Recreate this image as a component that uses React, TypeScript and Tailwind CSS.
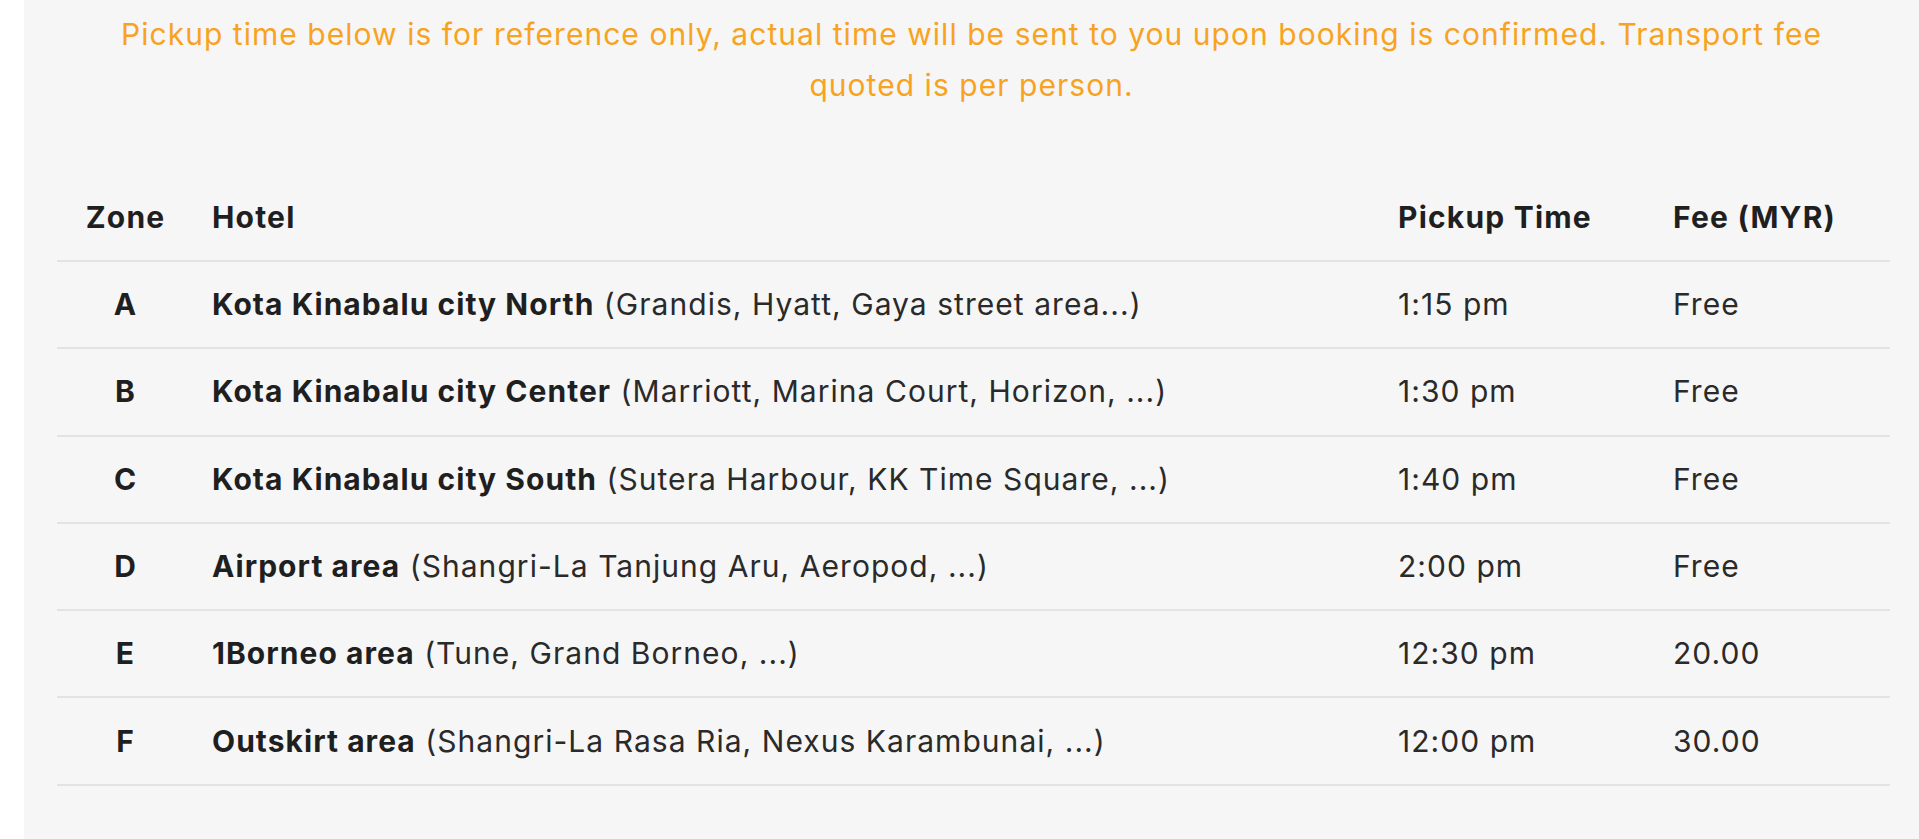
const rows = [
  { zone: "A", area: "Kota Kinabalu city North", hotels: "(Grandis, Hyatt, Gaya street area...)", time: "1:15 pm", fee: "Free" },
  { zone: "B", area: "Kota Kinabalu city Center", hotels: "(Marriott, Marina Court, Horizon, ...)", time: "1:30 pm", fee: "Free" },
  { zone: "C", area: "Kota Kinabalu city South", hotels: "(Sutera Harbour, KK Time Square, ...)", time: "1:40 pm", fee: "Free" },
  { zone: "D", area: "Airport area", hotels: "(Shangri-La Tanjung Aru, Aeropod, ...)", time: "2:00 pm", fee: "Free" },
  { zone: "E", area: "1Borneo area", hotels: "(Tune, Grand Borneo, ...)", time: "12:30 pm", fee: "20.00" },
  { zone: "F", area: "Outskirt area", hotels: "(Shangri-La Rasa Ria, Nexus Karambunai, ...)", time: "12:00 pm", fee: "30.00" },
];

const cols = "grid grid-cols-[137px_1186px_275px_235px] items-center";

export default function App() {
  return (
    <div className="min-h-[839px] bg-white pl-[24px] font-['Inter',sans-serif] tracking-[0.065em]">
      <div className="min-h-[839px] bg-[#f6f6f6] pt-[9px] pb-10">
        <p className="mx-auto w-[1790px] text-center text-[30px] leading-[51px] text-[#f8a31f]">
          Pickup time below is for reference only, actual time will be sent to you upon booking is confirmed. Transport fee quoted is per person.
        </p>

        <div className="ml-[33px] mt-[64px] w-[1833px] text-[30px] text-[#2a2a2a]">
          <div className={`${cols} h-[87px] border-b-2 border-[#e3e3e3] font-bold text-[#1f1f1f] tracking-[0.04em]`}>
            <div className="text-center">Zone</div>
            <div className="px-[18px]">Hotel</div>
            <div className="px-[18px]">Pickup Time</div>
            <div className="px-[18px]">Fee (MYR)</div>
          </div>
          {rows.map((r) => (
            <div key={r.zone} className={`${cols} h-[87.3px] border-b-2 border-[#e3e3e3]`}>
              <div className="text-center font-bold text-[#1f1f1f]">{r.zone}</div>
              <div className="px-[18px] whitespace-nowrap">
                <span className="font-bold text-[#1f1f1f]">{r.area}</span> {r.hotels}
              </div>
              <div className="px-[18px]">{r.time}</div>
              <div className="px-[18px]">{r.fee}</div>
            </div>
          ))}
        </div>
      </div>
    </div>
  );
}
